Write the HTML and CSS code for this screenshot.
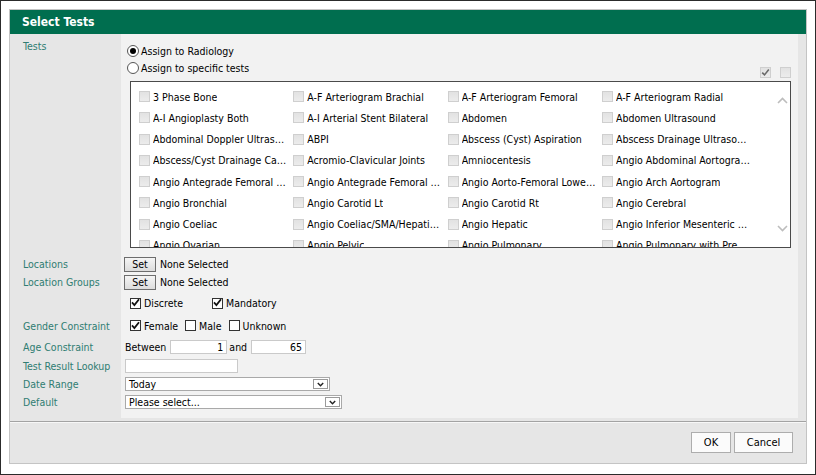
FILE: index.html
```html
<!DOCTYPE html>
<html lang="en">
<head>
    <meta charset="UTF-8">
    <title>Select Tests</title>
    <link rel="stylesheet" href="styles.css">
</head>
<body>
    <div class="frame">
        <div class="dialog">
            <div class="dialog_title">Select Tests</div>

            <div class="form">
                <!-- Tests -->
                <div class="label label_top">Tests</div>
                <div class="field field_tests">
                    <div class="radio_line">
                        <span class="radio checked"></span>Assign to Radiology
                    </div>
                    <div class="radio_line">
                        <span class="radio"></span>Assign to specific tests
                        <div class="bulk">
                            <span class="box box_dis">
                                <svg width="9" height="9" viewBox="0 0 9 9"><path d="M1.2 4.6 L3.5 6.9 L7.8 1.6" fill="none" stroke="#6a6a6a" stroke-width="1.6"/></svg>
                            </span>
                            <span class="box box_dis"></span>
                        </div>
                    </div>
                    <div class="test_list">
                        <div class="test_grid">
                            <div class="test_item"><span class="box box_dis"></span><span class="test_name">3 Phase Bone</span></div>
                            <div class="test_item"><span class="box box_dis"></span><span class="test_name">A-F Arteriogram Brachial</span></div>
                            <div class="test_item"><span class="box box_dis"></span><span class="test_name">A-F Arteriogram Femoral</span></div>
                            <div class="test_item"><span class="box box_dis"></span><span class="test_name">A-F Arteriogram Radial</span></div>

                            <div class="test_item"><span class="box box_dis"></span><span class="test_name">A-I Angioplasty Both</span></div>
                            <div class="test_item"><span class="box box_dis"></span><span class="test_name">A-I Arterial Stent Bilateral</span></div>
                            <div class="test_item"><span class="box box_dis"></span><span class="test_name">Abdomen</span></div>
                            <div class="test_item"><span class="box box_dis"></span><span class="test_name">Abdomen Ultrasound</span></div>

                            <div class="test_item"><span class="box box_dis"></span><span class="test_name">Abdominal Doppler Ultrasound</span></div>
                            <div class="test_item"><span class="box box_dis"></span><span class="test_name">ABPI</span></div>
                            <div class="test_item"><span class="box box_dis"></span><span class="test_name">Abscess (Cyst) Aspiration</span></div>
                            <div class="test_item"><span class="box box_dis"></span><span class="test_name">Abscess Drainage Ultrasound</span></div>

                            <div class="test_item"><span class="box box_dis"></span><span class="test_name">Abscess/Cyst Drainage Catheter</span></div>
                            <div class="test_item"><span class="box box_dis"></span><span class="test_name">Acromio-Clavicular Joints</span></div>
                            <div class="test_item"><span class="box box_dis"></span><span class="test_name">Amniocentesis</span></div>
                            <div class="test_item"><span class="box box_dis"></span><span class="test_name">Angio Abdominal Aortogram Run-off</span></div>

                            <div class="test_item"><span class="box box_dis"></span><span class="test_name">Angio Antegrade Femoral Left</span></div>
                            <div class="test_item"><span class="box box_dis"></span><span class="test_name">Angio Antegrade Femoral Right</span></div>
                            <div class="test_item"><span class="box box_dis"></span><span class="test_name">Angio Aorto-Femoral Lower Limb</span></div>
                            <div class="test_item"><span class="box box_dis"></span><span class="test_name">Angio Arch Aortogram</span></div>

                            <div class="test_item"><span class="box box_dis"></span><span class="test_name">Angio Bronchial</span></div>
                            <div class="test_item"><span class="box box_dis"></span><span class="test_name">Angio Carotid Lt</span></div>
                            <div class="test_item"><span class="box box_dis"></span><span class="test_name">Angio Carotid Rt</span></div>
                            <div class="test_item"><span class="box box_dis"></span><span class="test_name">Angio Cerebral</span></div>

                            <div class="test_item"><span class="box box_dis"></span><span class="test_name">Angio Coeliac</span></div>
                            <div class="test_item"><span class="box box_dis"></span><span class="test_name">Angio Coeliac/SMA/Hepatic Run</span></div>
                            <div class="test_item"><span class="box box_dis"></span><span class="test_name">Angio Hepatic</span></div>
                            <div class="test_item"><span class="box box_dis"></span><span class="test_name">Angio Inferior Mesenteric Artery</span></div>

                            <div class="test_item"><span class="box box_dis"></span><span class="test_name">Angio Ovarian</span></div>
                            <div class="test_item"><span class="box box_dis"></span><span class="test_name">Angio Pelvic</span></div>
                            <div class="test_item"><span class="box box_dis"></span><span class="test_name">Angio Pulmonary</span></div>
                            <div class="test_item"><span class="box box_dis"></span><span class="test_name">Angio Pulmonary with Pressures</span></div>
                        </div>
                        <div class="scroll">
                            <svg width="11" height="7" viewBox="0 0 11 7"><path d="M1 6 L5.5 1.5 L10 6" fill="none" stroke="#bdbdbd" stroke-width="1.6"/></svg>
                            <svg width="11" height="7" viewBox="0 0 11 7"><path d="M1 1 L5.5 5.5 L10 1" fill="none" stroke="#bdbdbd" stroke-width="1.6"/></svg>
                        </div>
                    </div>
                </div>

                <!-- Locations -->
                <div class="label">Locations</div>
                <div class="field">
                    <span class="set_btn">Set</span><span class="none_sel">None Selected</span>
                </div>

                <div class="label">Location Groups</div>
                <div class="field">
                    <span class="set_btn">Set</span><span class="none_sel">None Selected</span>
                </div>

                <!-- Options -->
                <div class="label"></div>
                <div class="field field_checks">
                    <span class="check_opt opt_wide"><span class="box checked_box"><svg width="9" height="9" viewBox="0 0 9 9"><path d="M1 4.4 L3.4 7 L8 1.2" fill="none" stroke="#111" stroke-width="1.8"/></svg></span>Discrete</span>
                    <span class="check_opt"><span class="box checked_box"><svg width="9" height="9" viewBox="0 0 9 9"><path d="M1 4.4 L3.4 7 L8 1.2" fill="none" stroke="#111" stroke-width="1.8"/></svg></span>Mandatory</span>
                </div>

                <div class="label">Gender Constraint</div>
                <div class="field field_checks">
                    <span class="check_opt"><span class="box checked_box"><svg width="9" height="9" viewBox="0 0 9 9"><path d="M1 4.4 L3.4 7 L8 1.2" fill="none" stroke="#111" stroke-width="1.8"/></svg></span>Female</span>
                    <span class="check_opt"><span class="box"></span>Male</span>
                    <span class="check_opt"><span class="box"></span>Unknown</span>
                </div>

                <!-- Age -->
                <div class="label">Age Constraint</div>
                <div class="field field_age">
                    <span>Between</span>
                    <span class="text_in age_in">1</span>
                    <span class="age_and">and</span>
                    <span class="text_in age_in age_max">65</span>
                </div>

                <div class="label">Test Result Lookup</div>
                <div class="field field_in">
                    <span class="text_in lookup_in"></span>
                </div>

                <div class="label">Date Range</div>
                <div class="field field_in">
                    <span class="select date_sel">Today<span class="sel_arrow"><svg width="7" height="5" viewBox="0 0 7 5"><path d="M0.8 1 L3.5 3.8 L6.2 1" fill="none" stroke="#222" stroke-width="1.4"/></svg></span></span>
                </div>

                <div class="label label_last">Default</div>
                <div class="field field_in field_last">
                    <span class="select default_sel">Please select...<span class="sel_arrow"><svg width="7" height="5" viewBox="0 0 7 5"><path d="M0.8 1 L3.5 3.8 L6.2 1" fill="none" stroke="#222" stroke-width="1.4"/></svg></span></span>
                </div>
            </div>

            <div class="dialog_footer">
                <button class="dlg_btn ok_btn">OK</button>
                <button class="dlg_btn">Cancel</button>
            </div>
        </div>
    </div>
</body>
</html>
```

FILE: styles.css
```css
body {
    margin: 0;
    background: #fff;
    font-family: "DejaVu Sans Condensed", "DejaVu Sans", sans-serif;
    font-stretch: condensed;
    font-size: 10.5px;
    color: #000;
}

.frame {
    width: 816px;
    height: 475px;
    box-sizing: border-box;
    border: 1px solid #2b2b2b;
    padding: 8px 8px 10px;
    display: flex;
}

.dialog {
    flex: 1;
    display: flex;
    flex-direction: column;
    border: 1px solid #c4c4c4;
    background: #e6e6e6;
}

.dialog_title {
    height: 24px;
    line-height: 24px;
    padding-left: 12px;
    background: #006e4f;
    color: #fff;
    font-weight: bold;
    font-size: 12px;
}

.form {
    display: grid;
    grid-template-columns: 111px 1fr;
    grid-template-rows: 221px 18px 18px 24px 21px 21px 18px 18px 25px;
    padding-right: 8px;
    padding-bottom: 3px;
    border-bottom: 1px solid #a3a3a3;
}

.label {
    display: flex;
    align-items: center;
    padding-left: 13px;
    color: #2f7d72;
}

.label_top {
    align-items: flex-start;
    padding-top: 6px;
}

.label_last {
    align-items: flex-start;
    padding-top: 3px;
}

.field {
    background: #f2f2f2;
    display: flex;
    align-items: center;
    padding-left: 3px;
}

.field_tests {
    flex-direction: column;
    align-items: stretch;
    padding: 8px 7px 0 6px;
}

.radio_line {
    height: 17px;
    display: flex;
    align-items: center;
}

.radio {
    width: 12px;
    height: 12px;
    box-sizing: border-box;
    border: 1px solid #555;
    border-radius: 50%;
    background: #fff;
    margin-right: 2px;
    display: flex;
    align-items: center;
    justify-content: center;
}

.radio.checked::after {
    content: "";
    width: 6px;
    height: 6px;
    border-radius: 50%;
    background: #000;
}

.bulk {
    margin-left: auto;
    align-self: flex-end;
    margin-bottom: -2px;
    display: flex;
    gap: 9px;
}

.box {
    width: 11px;
    height: 11px;
    box-sizing: border-box;
    border: 1px solid #333;
    background: #fff;
    display: flex;
    align-items: center;
    justify-content: center;
    flex-shrink: 0;
}

.box_dis {
    border-color: #cfcfcf;
    background: linear-gradient(#e2e2e2, #ececec);
}

.test_list {
    margin: 5px 0 0 3px;
    height: 167px;
    box-sizing: border-box;
    border: 1px solid #4a4a4a;
    background: #fff;
    display: flex;
    overflow: hidden;
}

.test_grid {
    flex: 1;
    display: grid;
    grid-template-columns: repeat(4, 154.33px);
    grid-auto-rows: 21.25px;
    padding: 4px 0 0 8px;
}

.test_item {
    display: flex;
    align-items: center;
}

.test_item .box {
    margin-right: 3px;
}

.test_name {
    max-width: 134px;
    white-space: nowrap;
    overflow: hidden;
    text-overflow: ellipsis;
}

.scroll {
    width: 15px;
    display: flex;
    flex-direction: column;
    justify-content: space-between;
    align-items: center;
    padding: 15px 0 15px;
}

.set_btn {
    width: 32px;
    height: 15px;
    box-sizing: border-box;
    border: 1px solid #6d6d6d;
    background: linear-gradient(#f5f5f5, #dcdcdc);
    display: flex;
    align-items: center;
    justify-content: center;
}

.none_sel {
    margin-left: 4px;
}

.field_checks {
    padding-left: 9px;
}

.check_opt {
    display: flex;
    align-items: center;
    margin-right: 7px;
}

.check_opt .box {
    margin-right: 3px;
}

.opt_wide {
    width: 82px;
    margin-right: 0;
}

.checked_box svg {
    margin-top: -1px;
}

.field_age {
    padding-left: 4px;
}

.text_in {
    height: 14px;
    box-sizing: border-box;
    border: 1px solid #cacaca;
    background: #fff;
    display: flex;
    align-items: center;
}

.age_in {
    width: 57px;
    justify-content: flex-end;
    padding-right: 3px;
    margin-left: 4px;
}

.age_and {
    margin-left: 2px;
}

.age_max {
    width: 55px;
}

.field_in {
    padding-left: 4px;
}

.lookup_in {
    width: 113px;
}

.select {
    height: 14px;
    box-sizing: border-box;
    border: 1px solid #a9a9a9;
    background: #fff;
    display: flex;
    align-items: center;
    padding-left: 3px;
}

.date_sel {
    width: 205px;
}

.default_sel {
    width: 217px;
}

.sel_arrow {
    margin-left: auto;
    margin-right: 1px;
    width: 15px;
    height: 10px;
    box-sizing: border-box;
    border: 1px solid #9a9a9a;
    display: flex;
    align-items: center;
    justify-content: center;
}

.field_last {
    align-items: flex-start;
    padding-top: 2px;
}

.dialog_footer {
    flex: 1;
    display: flex;
    justify-content: flex-end;
    align-items: flex-start;
    gap: 3px;
    padding: 9px 13px 0 0;
    border-top: 1px solid #f7f7f7;
}

.dlg_btn {
    height: 21px;
    padding: 0;
    border: 1px solid #adadad;
    background: #fbfbfb;
    font-family: inherit;
    font-stretch: condensed;
    font-size: 11px;
    color: #000;
}

.ok_btn {
    width: 40px;
}

.dlg_btn:not(.ok_btn) {
    width: 59px;
}
```
